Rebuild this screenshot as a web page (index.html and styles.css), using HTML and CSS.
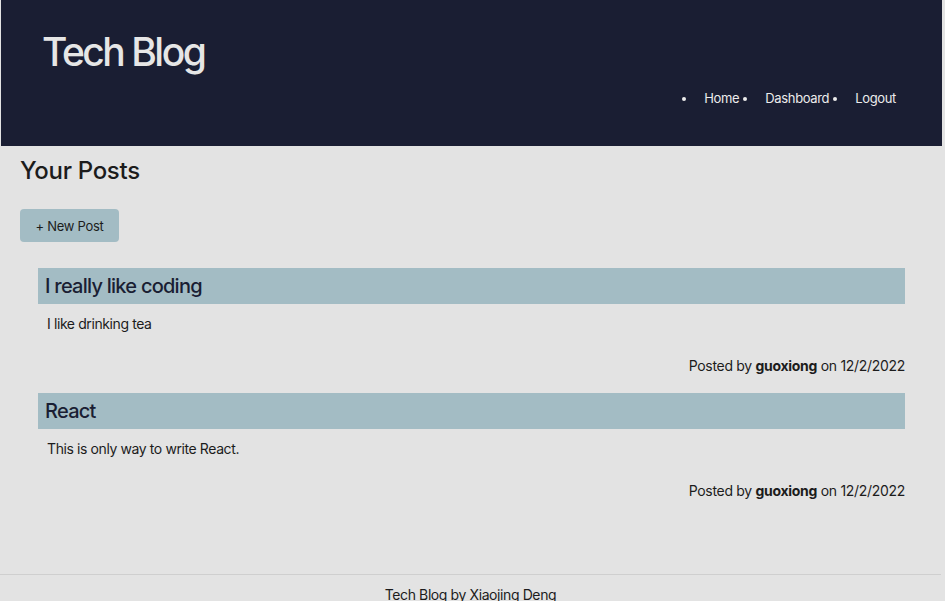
FILE: index.html
```html
<!DOCTYPE html>
<html lang="en">
<head>
<meta charset="utf-8">
<title>Tech Blog</title>
<link rel="stylesheet" href="styles.css">
</head>
<body>
<header class="site-header">
  <h1 class="brand">Tech Blog</h1>
  <nav class="nav">
    <span class="dot"></span>
    <a class="nav-link" href="#">Home</a>
    <span class="dot"></span>
    <a class="nav-link" href="#">Dashboard</a>
    <span class="dot"></span>
    <a class="nav-link" href="#">Logout</a>
  </nav>
</header>
<main class="main">
  <h2 class="page-title">Your Posts</h2>
  <button class="btn">+ New Post</button>
  <section class="posts">
    <article class="post">
      <h3 class="post-title">I really like coding</h3>
      <p class="post-body">I like drinking tea</p>
      <p class="post-meta">Posted by <b>guoxiong</b> on 12/2/2022</p>
    </article>
    <article class="post">
      <h3 class="post-title">React</h3>
      <p class="post-body">This is only way to write React.</p>
      <p class="post-meta">Posted by <b>guoxiong</b> on 12/2/2022</p>
    </article>
  </section>
</main>
<footer class="footer">Tech Blog by Xiaojing Deng</footer>
</body>
</html>
```
FILE: styles.css
```css
html, body {
  margin: 0;
  padding: 0;
}
body {
  background: #e3e3e3;
  font-family: Inter, "Noto Sans", sans-serif;
  color: #1c1c1c;
  letter-spacing: -0.4px;
  min-height: 612px;
  display: flex;
  flex-direction: column;
}
.site-header {
  background: #1a1e33;
  margin: 0 3px 0 1px;
  height: 146px;
  box-sizing: border-box;
  padding: 28px 46px 0 41px;
  display: flex;
  flex-direction: column;
}
.brand {
  margin: 0;
  font-size: 39px;
  font-weight: 500;
  color: #e6e6e6;
  letter-spacing: -2.5px;
  line-height: 48px;
}
.nav {
  align-self: flex-end;
  margin-top: 14px;
  display: flex;
  align-items: center;
  font-size: 13px;
  color: #ececec;
  letter-spacing: -0.35px;
}
.dot {
  width: 4px;
  height: 4px;
  border-radius: 50%;
  background: #ececec;
  margin: 1px 18px 0 4px;
}
.nav-link {
  color: #ececec;
  text-decoration: none;
}
.main {
  flex: 1;
  padding: 0 40px 0 20px;
}
.page-title {
  margin: 10px 0 0;
  font-size: 24px;
  font-weight: 500;
  line-height: 30px;
  letter-spacing: -0.3px;
  color: #1c1c1c;
}
.btn {
  margin-top: 23px;
  background: #a3bcc4;
  border: none;
  border-radius: 4px;
  width: 99px;
  height: 33px;
  font-family: inherit;
  font-size: 13px;
  letter-spacing: -0.3px;
  color: #1c1c1c;
}
.posts {
  padding: 26px 0 0 18px;
}
.post {
  margin-bottom: 18px;
}
.post-title {
  margin: 0;
  background: #a3bcc4;
  height: 36px;
  line-height: 36px;
  padding-left: 7px;
  font-size: 20px;
  font-weight: 500;
  letter-spacing: -0.75px;
  color: #1a1e33;
}
.post-body {
  margin: 11px 0 0 9px;
  font-size: 14px;
  line-height: 18px;
}
.post-meta {
  margin: 24px 0 0;
  text-align: right;
  font-size: 14px;
  line-height: 18px;
  letter-spacing: -0.3px;
}
.post-meta b {
  font-weight: 700;
}
.footer {
  border-top: 1px solid #cfcfcf;
  margin-right: 4px;
  text-align: center;
  font-size: 14px;
  padding-top: 11px;
  height: 26px;
}
```
